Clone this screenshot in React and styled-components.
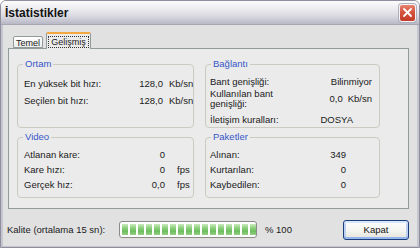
import React from 'react';
import styled, { createGlobalStyle } from 'styled-components';

const Global = createGlobalStyle`
  html, body { margin: 0; padding: 0; background: #ffffff; }
  body { font-family: "Liberation Sans", Arial, sans-serif; }
`;

const Window = styled.div`
  width: 420px;
  height: 248px;
  box-sizing: border-box;
  display: flex;
  flex-direction: column;
  border: 1px solid #8e8e9e;
  border-radius: 6px 6px 0 0;
  background: #e1e1e1;
  overflow: hidden;
  font-size: 9.5px;
  color: #1a1a1a;
`;

const TitleBar = styled.div`
  height: 23px;
  flex: none;
  display: flex;
  align-items: center;
  justify-content: space-between;
  padding: 0 3px 0 4px;
  background: linear-gradient(#fbfbfc, #ececf0 35%, #d6d6de 70%, #b8b8c6);
  border-bottom: 1px solid #a6a6b4;
`;

const Title = styled.span`
  font-size: 12px;
  font-weight: bold;
  color: #141414;
`;

const CloseButton = styled.div`
  width: 17px;
  height: 18px;
  box-sizing: border-box;
  border: 1px solid #f4f4f4;
  border-radius: 3px;
  background: linear-gradient(#e8826e, #d5533e 45%, #c23a28);
  display: flex;
  align-items: center;
  justify-content: center;
  box-shadow: 0 0 0 1px #b0b0bc;
`;

const Body = styled.div`
  flex: 1;
  display: flex;
  flex-direction: column;
  padding: 0 8px 0 4px;
  border-left: 2px solid #c6c6d0;
  border-right: 2px solid #c6c6d0;
  border-bottom: 2px solid #c6c6d0;
`;

const TabStrip = styled.div`
  height: 23px;
  flex: none;
  display: flex;
  align-items: flex-end;
  padding-left: 6px;
`;

const Tab = styled.div`
  box-sizing: border-box;
  height: ${(p) => (p.$active ? '17px' : '12px')};
  width: ${(p) => p.$w}px;
  margin-left: ${(p) => p.$ml || 0}px;
  margin-bottom: ${(p) => (p.$active ? '-1px' : '0')};
  position: relative;
  z-index: ${(p) => (p.$active ? 2 : 1)};
  display: flex;
  align-items: center;
  justify-content: center;
  font-size: 9px;
  border: 1px solid #919b9c;
  border-bottom: ${(p) => (p.$active ? 'none' : '1px solid #919b9c')};
  border-top: ${(p) => (p.$active ? '2px solid #f2a83e' : '1px solid #919b9c')};
  border-radius: 2px 2px 0 0;
  background: ${(p) => (p.$active ? '#ebebeb' : 'linear-gradient(#ffffff, #ececeb)')};
  padding-top: ${(p) => (p.$active ? '0' : '1px')};
`;

const FocusText = styled.span`
  border: 1px dotted #333;
  padding: 0 2px;
  line-height: 10px;
`;

const Panel = styled.div`
  height: 161px;
  box-sizing: border-box;
  margin-left: 1px;
  border: 1px solid #919b9c;
  background: #ebebeb;
  padding: 15px 0 0 8px;
  display: grid;
  grid-template-columns: 177px 175px;
  grid-template-rows: 64px 61px;
  column-gap: 11px;
  row-gap: 9px;
`;

const Group = styled.div`
  position: relative;
  box-sizing: border-box;
  border: 1px solid #cbcbc2;
  border-radius: 4px;
  padding: ${(p) => p.$pad};
  display: flex;
  flex-direction: column;
`;

const Legend = styled.span`
  position: absolute;
  top: -7px;
  left: 5px;
  padding: 0 2px;
  background: #ebebeb;
  color: #3656c8;
  font-size: 9.5px;
  line-height: 12px;
`;

const Row = styled.div`
  display: grid;
  grid-template-columns: ${(p) => p.$cols};
  column-gap: ${(p) => p.$gap || 0}px;
  align-items: center;
  height: ${(p) => p.$h}px;
  margin-top: ${(p) => p.$mt || 0}px;
  line-height: 10px;
  white-space: nowrap;
`;

const Label = styled.span``;

const Value = styled.span`
  text-align: right;
  grid-column: ${(p) => (p.$span ? `span ${p.$span}` : 'auto')};
  padding-right: ${(p) => p.$pr || 0}px;
`;

const Unit = styled.span`
  text-align: left;
`;

const Footer = styled.div`
  height: 37px;
  box-sizing: border-box;
  padding-top: 4px;
  display: flex;
  align-items: center;
`;

const FooterLabel = styled.span`
  width: 112px;
  flex: none;
`;

const Progress = styled.div`
  width: 138px;
  height: 17px;
  box-sizing: border-box;
  border: 1px solid #8a8a8a;
  border-radius: 3px;
  background: #ffffff;
  padding: 2px 2px;
  display: flex;
  gap: 2px;
  overflow: hidden;
  flex: none;
`;

const Segment = styled.div`
  width: 6px;
  flex: none;
  background: linear-gradient(#c9ebc0, #8fd17f 35%, #6cbb5e 65%, #94d285);
`;

const Percent = styled.span`
  margin-left: 8px;
`;

const Button = styled.button`
  margin-left: auto;
  width: 66px;
  height: 20px;
  box-sizing: border-box;
  border: 1px solid #1c3f7a;
  border-radius: 3px;
  background: linear-gradient(#ffffff, #f2f2ee 60%, #e2e0d8);
  box-shadow: inset 0 -2px 0 #94b4ec, inset 0 2px 0 #d8e6fc, inset 2px 0 0 #bcd0f4, inset -2px 0 0 #bcd0f4;
  font-family: "Liberation Sans", Arial, sans-serif;
  font-size: 9.5px;
  color: #111;
  padding: 0;
`;

export default function App() {
  const ortamCols = '95px 38px auto';
  const videoCols = '91px 38px auto';
  const bagCols = '1fr auto auto';
  return (
    <>
      <Global />
      <Window>
        <TitleBar>
          <Title>İstatistikler</Title>
          <CloseButton>
            <svg width="11" height="11" viewBox="0 0 11 11">
              <path d="M2 2 L9 9 M9 2 L2 9" stroke="#ffffff" strokeWidth="1.8" strokeLinecap="round" />
            </svg>
          </CloseButton>
        </TitleBar>
        <Body>
          <TabStrip>
            <Tab $w={30}>Temel</Tab>
            <Tab $w={45} $ml={3} $active>
              <FocusText>Gelişmiş</FocusText>
            </Tab>
          </TabStrip>
          <Panel>
            <Group $pad="10px 0 0 6px">
              <Legend>Ortam</Legend>
              <Row $cols={ortamCols} $gap={6} $h={17}>
                <Label>En yüksek bit hızı:</Label>
                <Value>128,0</Value>
                <Unit>Kb/sn</Unit>
              </Row>
              <Row $cols={ortamCols} $gap={6} $h={17}>
                <Label>Seçilen bit hızı:</Label>
                <Value>128,0</Value>
                <Unit>Kb/sn</Unit>
              </Row>
            </Group>
            <Group $pad="10px 7px 0 4px">
              <Legend>Bağlantı</Legend>
              <Row $cols={bagCols} $gap={5} $h={14}>
                <Label>Bant genişliği:</Label>
                <Value $span={2}>Bilinmiyor</Value>
              </Row>
              <Row $cols={bagCols} $gap={5} $h={20}>
                <Label>
                  Kullanılan bant
                  <br />
                  genişliği:
                </Label>
                <Value>0,0</Value>
                <Unit>Kb/sn</Unit>
              </Row>
              <Row $cols={bagCols} $gap={5} $h={14} $mt={5}>
                <Label>İletişim kuralları:</Label>
                <Value $span={2} $pr={19}>DOSYA</Value>
              </Row>
            </Group>
            <Group $pad="9px 0 0 6px">
              <Legend>Video</Legend>
              <Row $cols={videoCols} $gap={12} $h={15}>
                <Label>Atlanan kare:</Label>
                <Value>0</Value>
                <Unit></Unit>
              </Row>
              <Row $cols={videoCols} $gap={12} $h={15}>
                <Label>Kare hızı:</Label>
                <Value>0</Value>
                <Unit>fps</Unit>
              </Row>
              <Row $cols={videoCols} $gap={12} $h={15}>
                <Label>Gerçek hız:</Label>
                <Value>0,0</Value>
                <Unit>fps</Unit>
              </Row>
            </Group>
            <Group $pad="9px 33px 0 4px">
              <Legend>Paketler</Legend>
              <Row $cols="1fr auto" $h={15}>
                <Label>Alınan:</Label>
                <Value>349</Value>
              </Row>
              <Row $cols="1fr auto" $h={15}>
                <Label>Kurtarılan:</Label>
                <Value>0</Value>
              </Row>
              <Row $cols="1fr auto" $h={15}>
                <Label>Kaybedilen:</Label>
                <Value>0</Value>
              </Row>
            </Group>
          </Panel>
          <Footer>
            <FooterLabel>Kalite (ortalama 15 sn):</FooterLabel>
            <Progress>
              {Array.from({ length: 17 }).map((_, i) => (
                <Segment key={i} />
              ))}
            </Progress>
            <Percent>% 100</Percent>
            <Button>Kapat</Button>
          </Footer>
        </Body>
      </Window>
    </>
  );
}
